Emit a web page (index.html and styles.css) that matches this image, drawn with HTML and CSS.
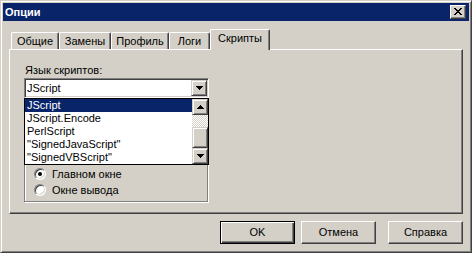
FILE: index.html
```html
<!DOCTYPE html>
<html lang="ru">
<head>
<meta charset="utf-8">
<title>Опции</title>
<link rel="stylesheet" href="styles.css">
</head>
<body>
<div class="window">
  <div class="titlebar">
    <span class="title">Опции</span>
    <div class="close">
      <svg width="8" height="7" viewBox="0 0 8 7" shape-rendering="crispEdges"><path d="M0 0h2v1H0zM6 0h2v1H6zM1 1h2v1H1zM5 1h2v1H5zM2 2h4v1H2zM3 3h2v1H3zM2 4h4v1H2zM1 5h2v1H1zM5 5h2v1H5zM0 6h2v1H0zM6 6h2v1H6z" fill="#000"/></svg>
    </div>
  </div>
  <div class="tabs">
    <div class="tab t1">Общие</div>
    <div class="tab t2">Замены</div>
    <div class="tab t3">Профиль</div>
    <div class="tab t4">Логи</div>
    <div class="tab t5 active">Скрипты</div>
  </div>
  <div class="panel">
    <div class="label">Язык скриптов:</div>
    <div class="combo-wrap">
      <div class="combo">
        <span class="combo-text">JScript</span>
        <span class="sbtn"><svg width="7" height="4" viewBox="0 0 7 4" shape-rendering="crispEdges"><path d="M0 0h7v1H0zM1 1h5v1H1zM2 2h3v1H2zM3 3h1v1H3z" fill="#000"/></svg></span>
      </div>
      <div class="dropdown">
        <div class="items">
          <div class="item selected">JScript</div>
          <div class="item">JScript.Encode</div>
          <div class="item">PerlScript</div>
          <div class="item">"SignedJavaScript"</div>
          <div class="item">"SignedVBScript"</div>
        </div>
        <div class="scrollbar">
          <span class="sbtn"><svg width="7" height="4" viewBox="0 0 7 4" shape-rendering="crispEdges"><path d="M3 0h1v1H3zM2 1h3v1H2zM1 2h5v1H1zM0 3h7v1H0z" fill="#000"/></svg></span>
          <span class="track"></span>
          <span class="thumb"></span>
          <span class="sbtn"><svg width="7" height="4" viewBox="0 0 7 4" shape-rendering="crispEdges"><path d="M0 0h7v1H0zM1 1h5v1H1zM2 2h3v1H2zM3 3h1v1H3z" fill="#000"/></svg></span>
        </div>
      </div>
    </div>
    <div class="group">
      <div class="radio-row"><span class="radio checked"></span><span>Главном окне</span></div>
      <div class="radio-row"><span class="radio"></span><span>Окне вывода</span></div>
    </div>
  </div>
  <div class="buttons">
    <div class="btn default">OK</div>
    <div class="btn cancel">Отмена</div>
    <div class="btn">Справка</div>
  </div>
</div>
</body>
</html>
```
FILE: styles.css
```css
html, body {
  margin: 0;
  padding: 0;
  background: #d4d0c8;
}
body {
  font-family: "Liberation Sans", Arial, sans-serif;
  font-size: 11px;
  line-height: 13px;
  color: #000;
}
.window {
  box-sizing: border-box;
  width: 472px;
  height: 253px;
  background: #d4d0c8;
  border: 1px solid;
  border-color: #d4d0c8 #404040 #404040 #d4d0c8;
  box-shadow: inset 1px 1px #fff, inset -1px -1px #808080;
  padding: 2px;
  display: flex;
  flex-direction: column;
}
.titlebar {
  height: 18px;
  flex: none;
  background: #0a246a;
  display: flex;
  align-items: center;
  justify-content: space-between;
  padding: 0 3px 0 2px;
}
.title {
  color: #fff;
  font-weight: bold;
  font-size: 11px;
}
.close {
  box-sizing: border-box;
  width: 16px;
  height: 14px;
  background: #d4d0c8;
  border: 1px solid;
  border-color: #fff #404040 #404040 #fff;
  box-shadow: inset -1px -1px #808080;
  display: flex;
  align-items: center;
  justify-content: center;
  padding: 0 1px 1px 0;
}
.close svg { display: block; }
.tabs {
  display: flex;
  align-items: flex-end;
  height: 20px;
  flex: none;
  margin: 8px 0 0 8px;
  position: relative;
  z-index: 1;
}
.tab {
  box-sizing: border-box;
  height: 17px;
  border-top: 1px solid #fff;
  border-left: 1px solid #fff;
  border-right: 1px solid #404040;
  box-shadow: inset -1px 0 #808080;
  border-top-left-radius: 2px;
  border-top-right-radius: 2px;
  display: flex;
  align-items: center;
  justify-content: center;
  background: #d4d0c8;
}
.t1 { width: 48px; }
.t2 { width: 52px; }
.t3 { width: 58px; }
.t4 { width: 41px; }
.t5 { width: 60px; }
.tab.active {
  height: 21px;
  margin-bottom: -1px;
  padding-bottom: 3px;
}
.panel {
  box-sizing: border-box;
  height: 165px;
  flex: none;
  margin: 0 6px;
  border: 1px solid;
  border-color: #fff #404040 #404040 #fff;
  box-shadow: inset -1px -1px #808080;
  padding: 14px 0 0 14px;
}
.label {
  height: 13px;
  margin-bottom: 1px;
  padding-left: 1px;
}
.combo-wrap {
  position: relative;
  width: 185px;
  height: 20px;
}
.combo {
  box-sizing: border-box;
  width: 185px;
  height: 20px;
  border: 1px solid;
  border-color: #808080 #fff #fff #808080;
  box-shadow: inset 1px 1px #404040, inset -1px -1px #d4d0c8;
  background: #fff;
  display: flex;
  align-items: center;
  padding: 1px 1px 1px 2px;
}
.combo-text {
  flex: 1;
}
.sbtn {
  box-sizing: border-box;
  width: 16px;
  height: 16px;
  flex: none;
  background: #d4d0c8;
  border: 1px solid;
  border-color: #d4d0c8 #404040 #404040 #d4d0c8;
  box-shadow: inset 1px 1px #fff, inset -1px -1px #808080;
  display: flex;
  align-items: center;
  justify-content: center;
}
.sbtn svg { display: block; }
.dropdown {
  position: absolute;
  top: 20px;
  left: 0;
  z-index: 2;
  box-sizing: border-box;
  width: 185px;
  height: 67px;
  border: 1px solid #000;
  background: #fff;
  display: flex;
}
.items {
  flex: 1;
}
.item {
  height: 13px;
  line-height: 13px;
  padding-left: 2px;
  white-space: nowrap;
}
.item.selected {
  background: #0a246a;
  color: #fff;
}
.scrollbar {
  width: 16px;
  display: flex;
  flex-direction: column;
}
.track {
  height: 12px;
  background-image: conic-gradient(#fff 25%, #d4d0c8 0 50%, #fff 0 75%, #d4d0c8 0);
  background-size: 2px 2px;
}
.thumb {
  box-sizing: border-box;
  height: 21px;
  background: #d4d0c8;
  border: 1px solid;
  border-color: #d4d0c8 #404040 #404040 #d4d0c8;
  box-shadow: inset 1px 1px #fff, inset -1px -1px #808080;
}
.group {
  box-sizing: border-box;
  width: 184px;
  height: 92px;
  margin-top: 12px;
  border: 1px solid #808080;
  box-shadow: inset 1px 1px #fff, 1px 1px #fff;
  padding: 55px 0 0 9px;
}
.radio-row {
  height: 16px;
  display: flex;
  align-items: center;
}
.radio {
  box-sizing: border-box;
  width: 12px;
  height: 12px;
  border-radius: 50%;
  border: 1px solid;
  border-color: #808080 #fff #fff #808080;
  box-shadow: inset 1px 1px #404040, inset -1px -1px #d4d0c8;
  background: #fff;
  margin-right: 6px;
  display: flex;
  align-items: center;
  justify-content: center;
}
.radio.checked::after {
  content: "";
  width: 4px;
  height: 4px;
  border-radius: 50%;
  background: #000;
}
.buttons {
  display: flex;
  justify-content: flex-end;
  margin: 7px 6px 0 0;
}
.btn {
  box-sizing: border-box;
  width: 75px;
  height: 23px;
  border: 1px solid;
  border-color: #fff #404040 #404040 #fff;
  box-shadow: inset -1px -1px #808080;
  display: flex;
  align-items: center;
  justify-content: center;
}
.btn.default {
  border-color: #000;
  box-shadow: inset 1px 1px #fff, inset -1px -1px #404040, inset -2px -2px #808080;
  margin-right: 6px;
}
.btn.cancel {
  margin-right: 12px;
}
```
